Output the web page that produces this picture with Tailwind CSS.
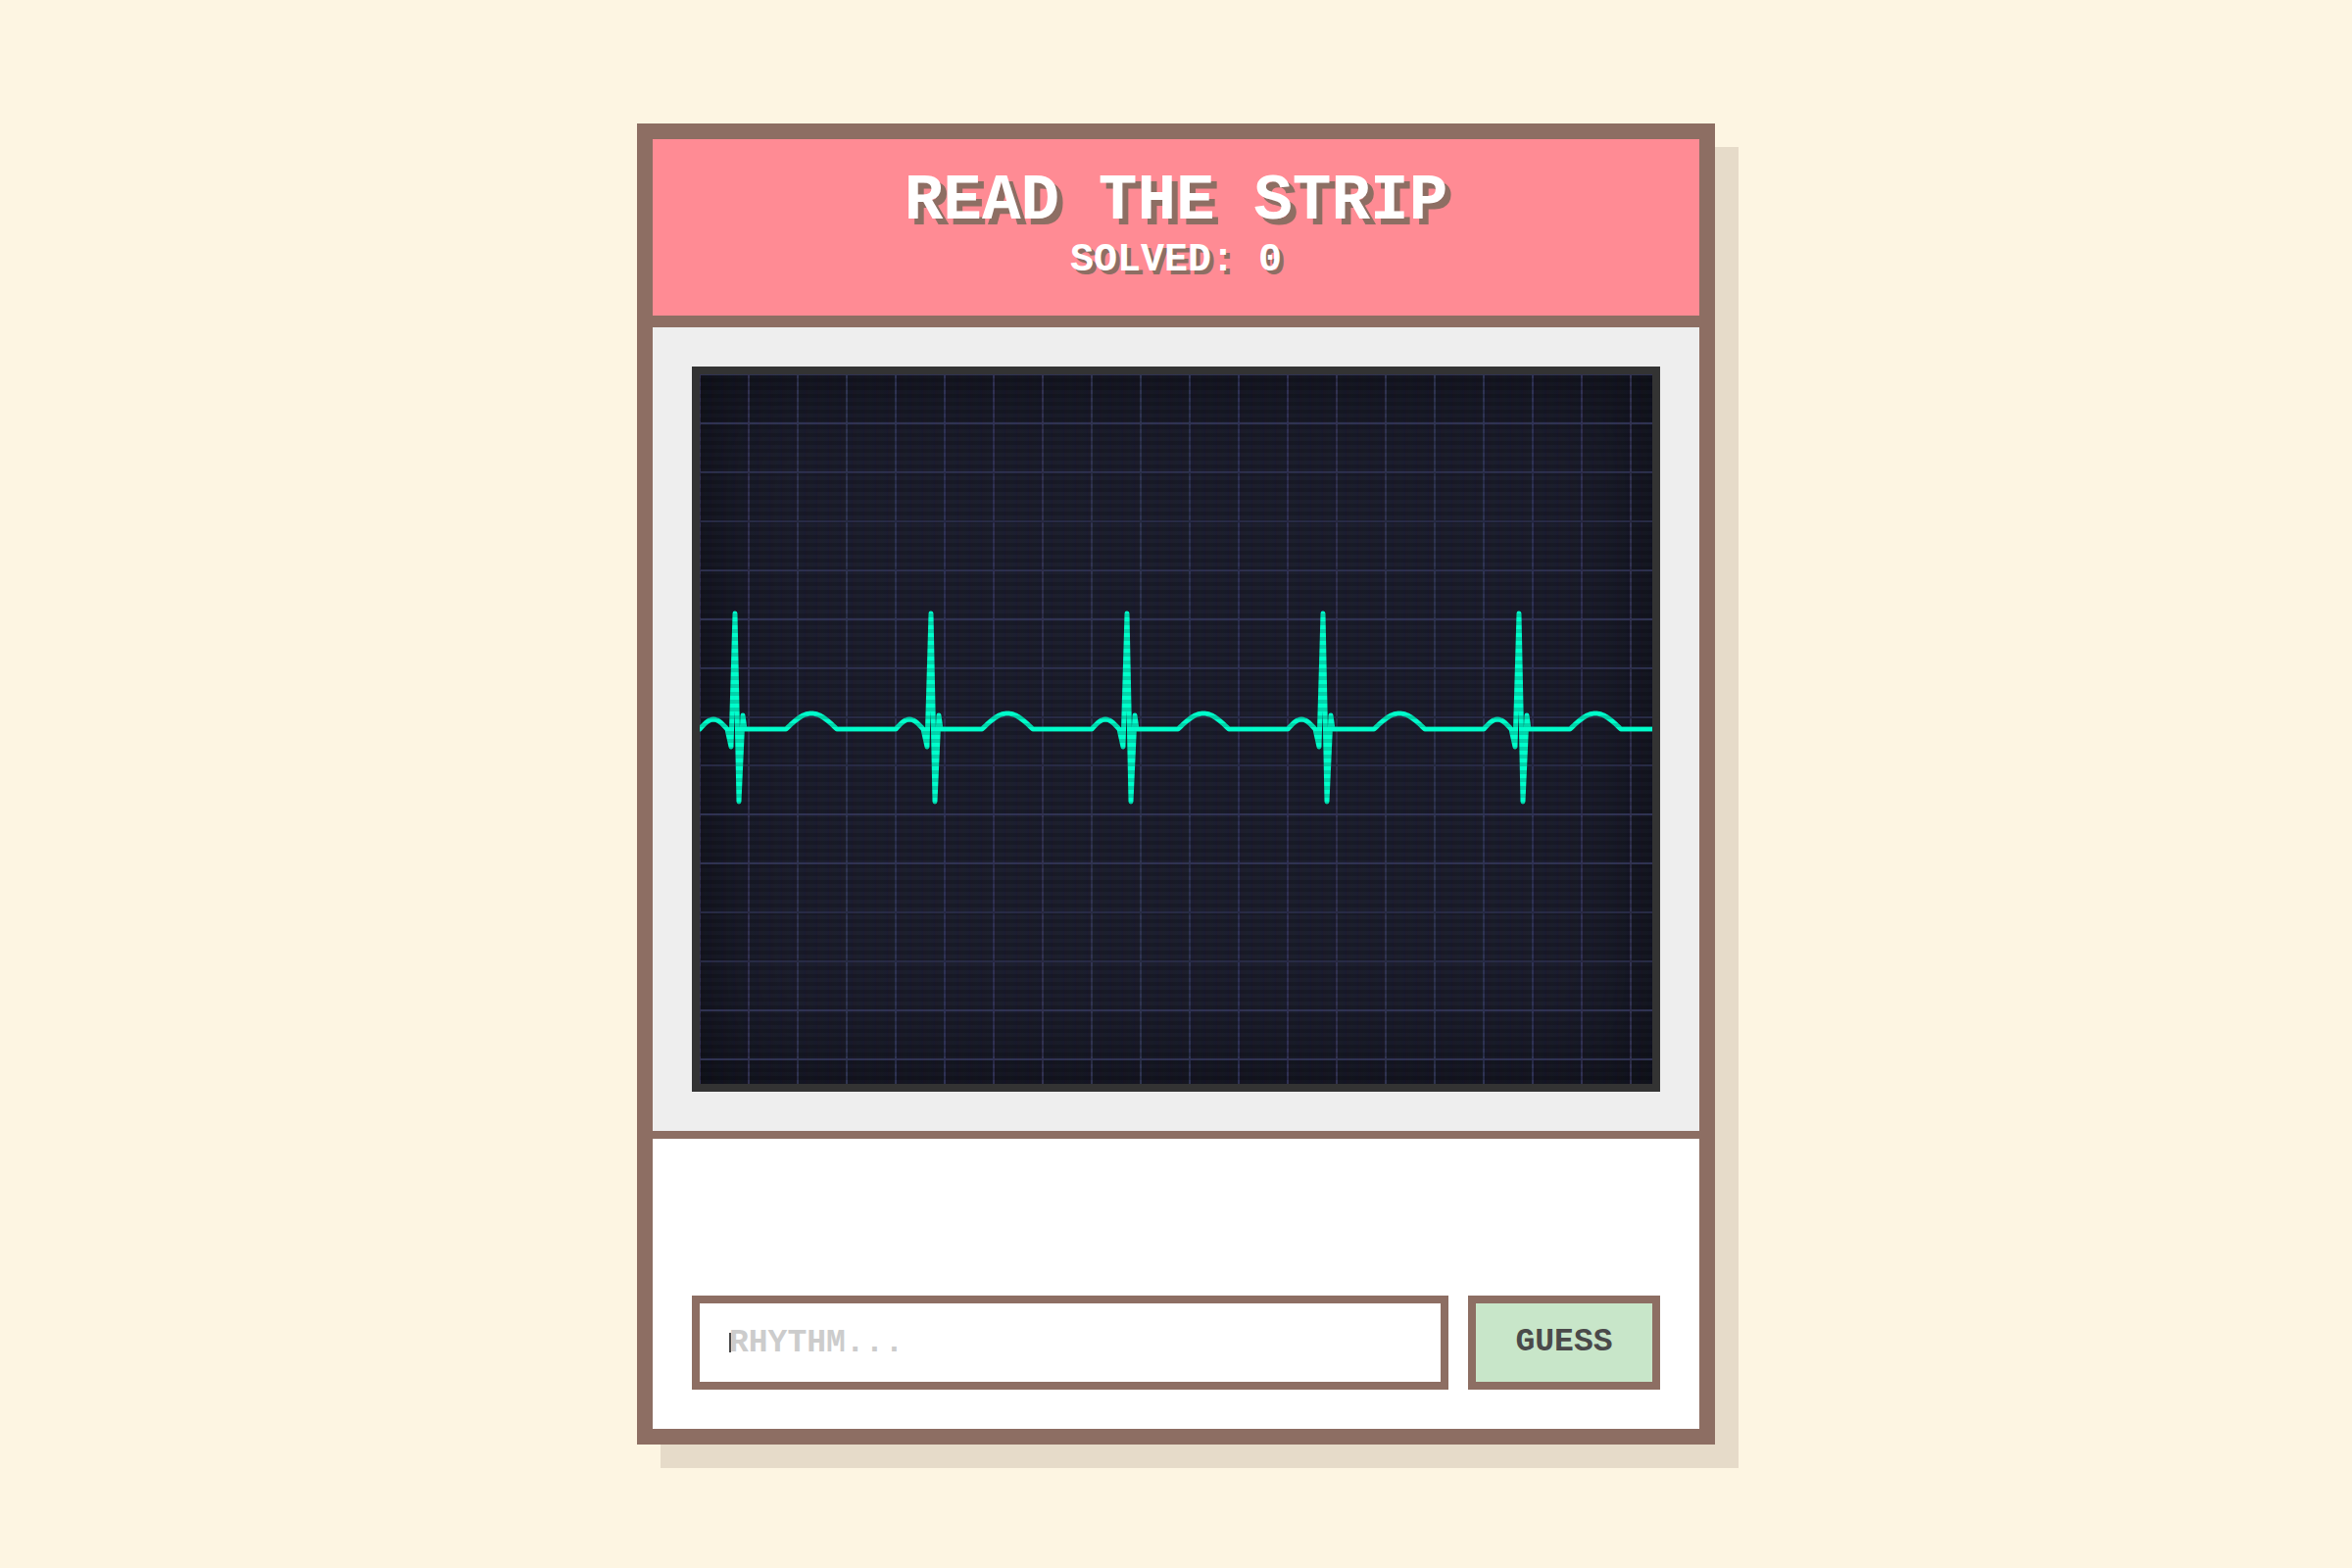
<!DOCTYPE html>
<html lang="en">
<head>
<meta charset="utf-8">
<title>Read the Strip</title>
<script src="https://cdn.jsdelivr.net/npm/@tailwindcss/browser@4"></script>
</head>
<body class="flex min-h-screen items-center justify-center bg-[#fdf5e2] font-['Liberation_Mono',monospace] text-[#4a4a4a]">
  <main class="w-full max-w-[1100px] border-16 border-[#8d6e63] bg-white shadow-[24px_24px_0_#e6dbc9]">
    <header class="border-b-12 border-[#8d6e63] bg-[#ff8b94] px-10 pt-7 pb-8 text-center font-bold text-white">
      <h1 class="text-[66px] leading-[72px] [text-shadow:6px_6px_0_#8d6e63]">READ THE STRIP</h1>
      <p class="text-[40px] leading-[48px] [text-shadow:4px_4px_0_#8d6e63]">SOLVED: 0</p>
    </header>
    <section class="border-b-8 border-[#8d6e63] bg-[#eeeeee] p-10">
      <div class="relative h-[740px] overflow-hidden border-8 border-[#333333] bg-[#1c1d2e] shadow-[inset_0_0_100px_rgba(0,0,0,0.6)]">
        <svg class="block h-full w-full" viewBox="0 0 972 724" preserveAspectRatio="none" fill="none" role="img" aria-label="Heart rhythm strip">
          <path id="grid" stroke="#303252" stroke-width="2"/>
          <path id="trace" stroke="#00ffcc" stroke-width="5" stroke-linecap="round" stroke-linejoin="round"/>
        </svg>
        <div class="pointer-events-none absolute inset-0 bg-[linear-gradient(rgba(18,16,16,0)_50%,rgba(0,0,0,0.16)_50%),linear-gradient(90deg,rgba(255,0,0,0.01),rgba(0,255,0,0.01),rgba(0,0,255,0.02))] bg-[size:100%_8px,12px_100%]"></div>
      </div>
    </section>
    <form class="px-10 pt-40 pb-10" onsubmit="return false">
      <div class="flex gap-5">
        <label class="relative flex min-w-0 flex-1">
          <input id="rhythm" aria-label="Rhythm" type="text" autocomplete="off" placeholder="RHYTHM..." class="peer h-24 w-full border-8 border-[#8d6e63] bg-white px-[30px] text-[33px] font-bold outline-none placeholder:text-[#cccccc]">
          <span class="absolute top-[38px] left-[38px] hidden h-5 w-0.5 bg-[#4a4a4a] peer-placeholder-shown:block peer-focus:hidden"></span>
        </label>
        <button type="submit" class="h-24 w-[196px] border-8 border-[#8d6e63] bg-[#c8e6c9] text-[33px] font-bold">GUESS</button>
      </div>
    </form>
  </main>
  <script>
    let grid = '';
    for (let x = 0; x <= 972; x += 50) grid += `M${x} 0V724`;
    for (let i = 0; i <= 14; i++) { const y = Math.round(i * 49.93); grid += `M0 ${y}H972`; }
    document.getElementById('grid').setAttribute('d', grid);

    const base = 362;
    const hump = (t, start, width, height) => height * Math.sin(Math.PI * (t - start) / width);
    let d = '';
    for (let beat = 0; beat < 1000; beat += 200) {
      const pts = [];
      for (let t = 0; t <= 28; t += 2) pts.push([t, -hump(t, 0, 28, 10)]);
      pts.push([32, 18], [36, -118], [40, 74], [44, -14], [46, 0]);
      for (let t = 88; t <= 140; t += 2) pts.push([t, -hump(t, 88, 52, 16)]);
      for (const [x, y] of pts) d += (d ? 'L' : 'M') + (beat + x) + ' ' + (base + y).toFixed(1);
    }
    document.getElementById('trace').setAttribute('d', d + 'L980 362');
  </script>
</body>
</html>
